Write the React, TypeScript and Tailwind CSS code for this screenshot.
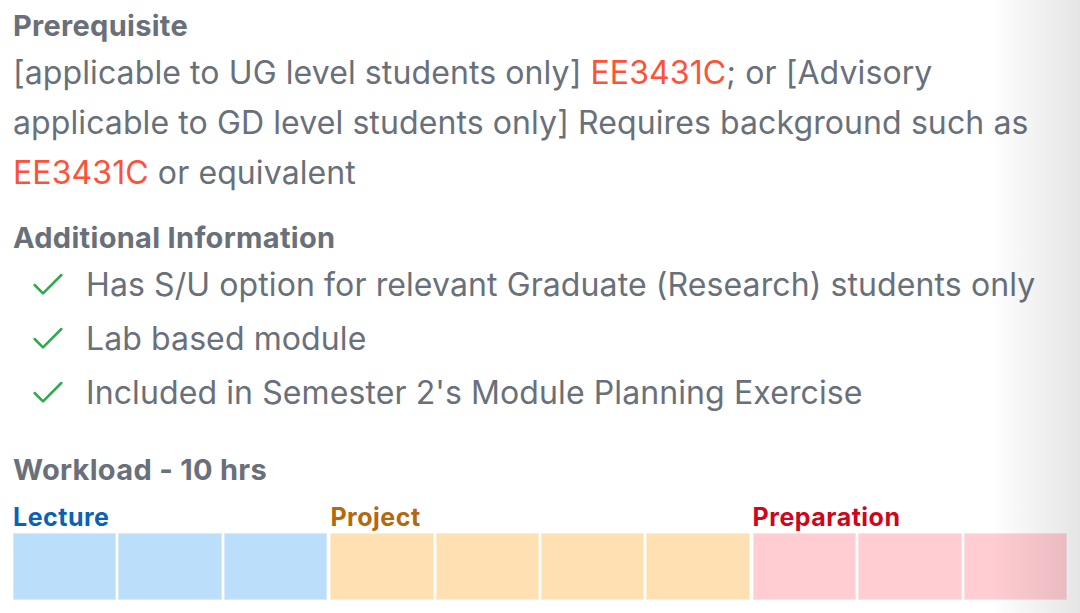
import { Check } from 'lucide-react';

const features = [
  'Has S/U option for relevant Graduate (Research) students only',
  'Lab based module',
  "Included in Semester 2's Module Planning Exercise",
];

const workload = [
  { name: 'Lecture', hours: 3, text: 'text-[#0b62b3]', cell: 'bg-[#bbdefb]' },
  { name: 'Project', hours: 4, text: 'text-[#b5680d]', cell: 'bg-[#ffe0b2]' },
  { name: 'Preparation', hours: 3, text: 'text-[#d0061c]', cell: 'bg-[#ffcdd2]' },
];

const App = () => {
  return (
    <div className="relative w-[1080px] h-[613px] overflow-hidden bg-white text-[#69707a] font-['Inter',sans-serif]">
      <div className="px-[13px] pt-[9px]">
        {/* Prerequisite */}
        <h3 className="text-[29px] leading-[34px] font-bold tracking-[0.3px]">Prerequisite</h3>
        <p className="mt-[5px] text-[32px] leading-[50px] tracking-[0.1px]">
          [applicable to UG level students only] <span className="text-[#ff5138]">EE3431C</span>; or [Advisory
          applicable to GD level students only] Requires background such as{' '}
          <span className="text-[#ff5138]">EE3431C</span> or equivalent
        </p>

        {/* Additional info */}
        <h3 className="mt-[23px] text-[29px] leading-[34px] font-bold tracking-[0.3px]">Additional Information</h3>
        <ul className="mt-[3px] pl-[15px]">
          {features.map((f) => (
            <li key={f} className="flex items-center gap-[18px] h-[54px] text-[32px] tracking-[0.1px]">
              <Check className="w-[40px] h-[40px] shrink-0 text-[#2eaa4a]" strokeWidth={1.5} />
              <span>{f}</span>
            </li>
          ))}
        </ul>

        {/* Workload */}
        <h3 className="mt-[33px] text-[29px] leading-[34px] font-bold tracking-[0.3px]">Workload - 10 hrs</h3>
        <div className="mt-[14px] flex gap-[3px]">
          {workload.map((w) => (
            <div key={w.name} className="flex flex-col" style={{ flexGrow: w.hours, flexBasis: 0 }}>
              <div className={`text-[25px] leading-[32px] font-bold tracking-[0.5px] ${w.text}`}>{w.name}</div>
              <div className="flex gap-[2px]">
                {Array.from({ length: w.hours }).map((_, i) => (
                  <div key={i} className={`flex-1 h-[67px] border border-white/40 ${w.cell}`} />
                ))}
              </div>
            </div>
          ))}
        </div>
      </div>

      {/* page edge shadow */}
      <div className="pointer-events-none absolute right-0 top-0 h-full w-[90px] bg-gradient-to-r from-transparent to-black/10" />
    </div>
  );
};

export default App;
